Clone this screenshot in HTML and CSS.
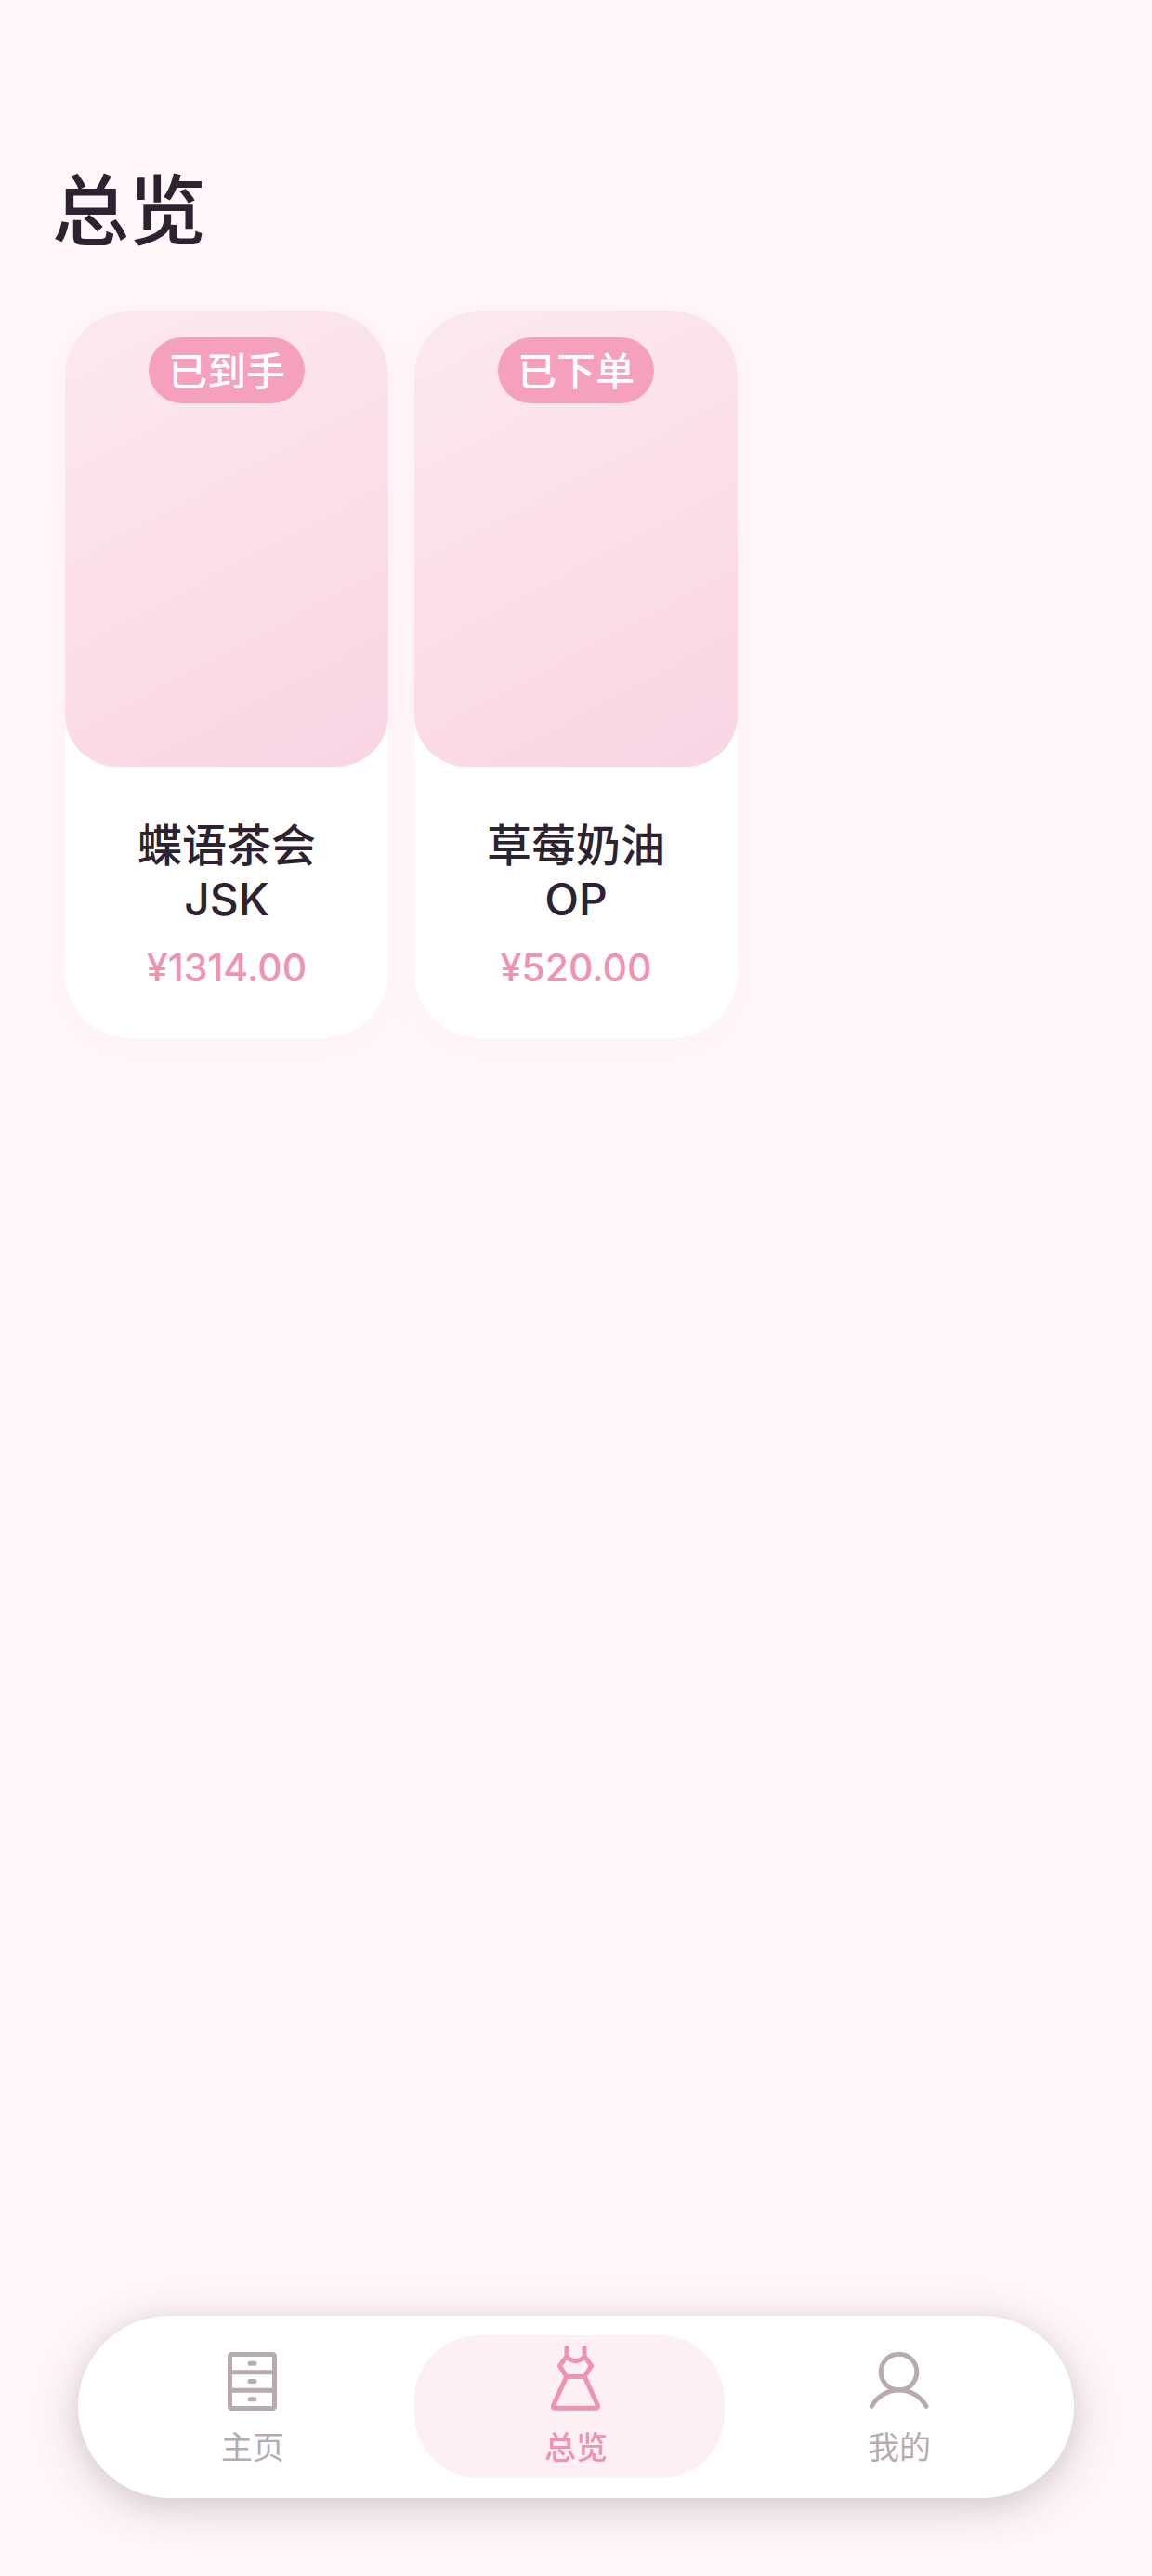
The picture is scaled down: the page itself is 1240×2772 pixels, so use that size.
FILE: index.html
```html
<!DOCTYPE html>
<html lang="zh-CN">
<head>
  <meta charset="utf-8">
  <meta name="viewport" content="width=device-width, initial-scale=1">
  <title>总览</title>
  <link rel="stylesheet" href="styles.css">
</head>
<body>
  <main class="page">
    <h1 class="page-title">总览</h1>
    <section class="grid" aria-label="总览">
      <article class="card">
        <div class="card-cover"><span class="badge">已到手</span></div>
        <div class="card-body">
          <h2 class="card-name">蝶语茶会 JSK</h2>
          <p class="card-price">¥1314.00</p>
        </div>
      </article>
      <article class="card">
        <div class="card-cover"><span class="badge">已下单</span></div>
        <div class="card-body">
          <h2 class="card-name">草莓奶油 OP</h2>
          <p class="card-price">¥520.00</p>
        </div>
      </article>
    </section>
  </main>

  <nav class="tabbar">
    <a class="tab" href="#home">
      <svg class="tab-icon" viewBox="0 0 70 70" aria-hidden="true">
        <rect x="10.5" y="9.5" width="48" height="58" rx="2"/>
        <path d="M10.5 28.8h48M10.5 48.2h48M32 19.3h5M32 38.5h5M32 57.7h5"/>
      </svg>
      <span class="tab-label">主页</span>
    </a>
    <a class="tab tab-active" href="#overview" aria-current="page">
      <svg class="tab-icon" viewBox="0 0 70 70" aria-hidden="true">
        <path d="M25 2.500V11.500L17.500 21.700L24.700 33.500H44.300L51.700 21.700L44 11.500V2.500M25 11.500Q29 16.700 34.500 16.700T44 11.500M24.700 33.500L10.600 64.500Q9.800 67.200 12.400 67.200H56.600Q59.200 67.200 58.400 64.500L44.300 33.500"/>
      </svg>
      <span class="tab-label">总览</span>
    </a>
    <a class="tab" href="#mine">
      <svg class="tab-icon" viewBox="0 0 70 70" aria-hidden="true">
        <circle cx="34.500" cy="28.500" r="19.300"/>
        <path d="M5.300 65.300A33.500 33.500 0 0 1 64 65.300"/>
      </svg>
      <span class="tab-label">我的</span>
    </a>
  </nav>
</body>
</html>
```
FILE: styles.css
```css
:root {
  --bg: #fff7fa;
  --ink: #2d2230;
  --pink: #f092b1;
  --muted: #b8aab0;
}

* {
  box-sizing: border-box;
}

body {
  margin: 0;
  min-height: 100vh;
  display: flex;
  flex-direction: column;
  background: var(--bg);
  color: var(--ink);
  font-family: Inter, "Noto Sans CJK SC", sans-serif;
}

.page {
  flex: 1;
  padding: 171px 70px 56px;
}

.page-title {
  margin: 0 -14px 52px;
  font-size: 83px;
  font-weight: 500;
  line-height: 112px;
}

.grid {
  display: grid;
  grid-template-columns: repeat(3, minmax(0, 1fr));
  gap: 28px;
}

.card {
  border-radius: 70px;
  background: #fff;
  box-shadow: 0 7px 42px rgba(240, 146, 177, 0.05);
}

.card-cover {
  display: flex;
  justify-content: center;
  align-items: flex-start;
  height: 490px;
  padding-top: 28px;
  border-radius: 70px 70px 56px 56px;
  background: linear-gradient(152deg, #fbe9ef 0%, #fcdfe8 50%, #f8d5e3 100%);
}

.badge {
  padding: 2px 21px 0;
  border-radius: 36px;
  background: #f5a0bd;
  color: #fff;
  font-size: 42px;
  font-weight: 500;
  line-height: 69px;
}

.card-body {
  padding: 56px 42px 46px;
  text-align: center;
}

.card-name {
  margin: 0 0 14px;
  font-size: 48px;
  font-weight: 500;
  line-height: 58px;
}

.card-price {
  margin: 0;
  color: var(--pink);
  font-size: 41px;
  font-weight: 500;
  line-height: 60px;
}

.tabbar {
  display: flex;
  margin: 0 84px 84px;
  padding: 21px 14px;
  border-radius: 98px;
  background: #fff;
  box-shadow:
    0 14px 84px rgba(240, 146, 177, 0.06),
    0 10px 56px rgba(0, 0, 0, 0.12),
    0 7px 28px rgba(0, 0, 0, 0.08);
}

.tab {
  position: relative;
  flex: 1;
  display: flex;
  flex-direction: column;
  align-items: center;
  gap: 16px;
  height: 154px;
  padding-top: 11px;
  color: var(--muted);
  text-decoration: none;
}

.tab-active {
  color: var(--pink);
}

/* Highlight behind the current tab */
.tab-active::before {
  content: "";
  position: absolute;
  inset: 0 14px 0 0;
  border-radius: 70px;
  background: #fdf0f4;
}

.tab-icon {
  position: relative;
  width: 70px;
  height: 70px;
  fill: none;
  stroke: currentColor;
  stroke-width: 5;
  stroke-linecap: round;
  stroke-linejoin: round;
}

.tab-label {
  position: relative;
  font-size: 34px;
  line-height: 48px;
}

.tab-active .tab-label {
  font-weight: 500;
}
```
